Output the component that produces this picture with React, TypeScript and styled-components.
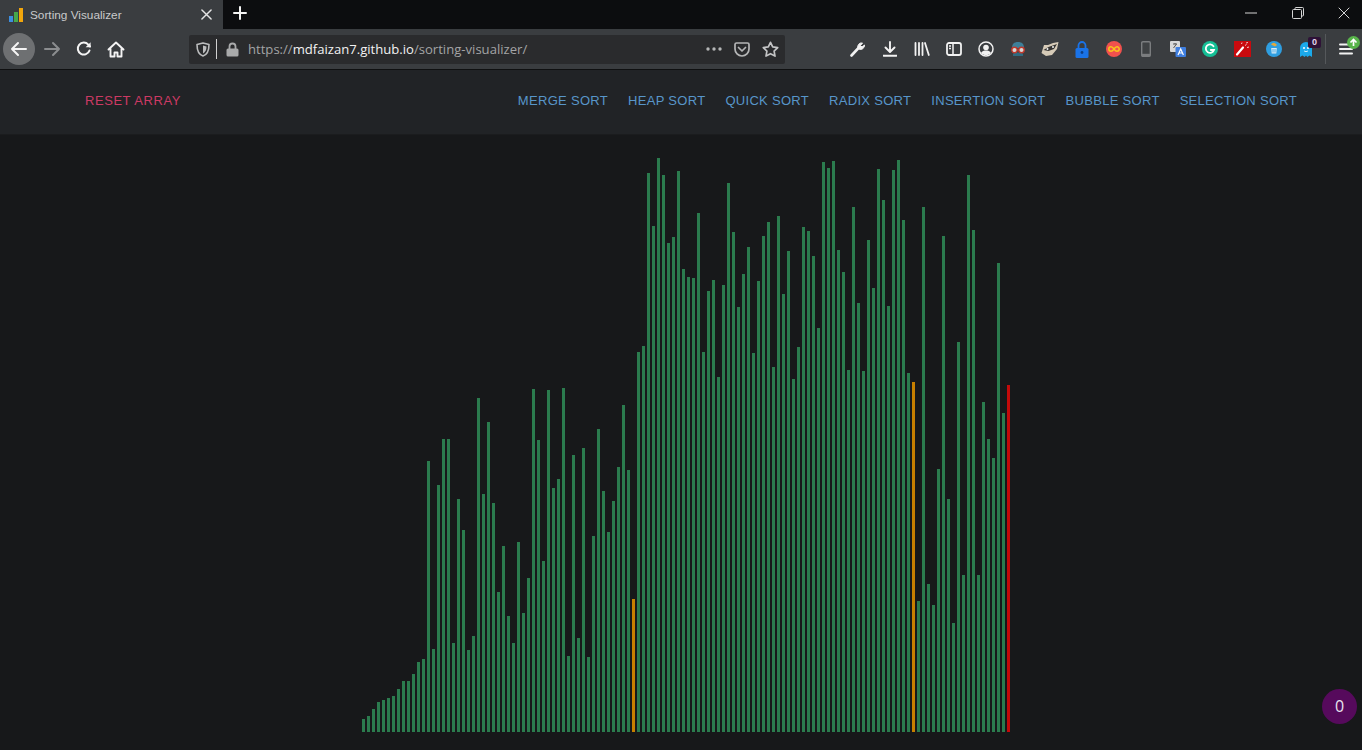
import React from "react";
import styled, { createGlobalStyle } from "styled-components";

const GlobalStyle = createGlobalStyle`
  html, body { margin: 0; padding: 0; height: 100%; background: #17181a; overflow: hidden; }
  #root { height: 100%; }
`;

const tops = [
  719,716,709,702,700,698,696,689,681,681,674,662,659,461,649,485,439,439,643,499,
  530,650,636,398,494,422,503,592,546,616,643,542,613,578,389,440,561,390,488,479,
  388,656,455,638,448,657,536,429,491,532,501,467,405,470,599,352,346,173,226,158,
  175,243,237,171,269,277,278,213,352,291,280,377,285,183,232,307,274,247,353,281,
  236,222,367,216,294,251,379,347,227,231,256,328,162,168,161,250,272,370,207,303,
  371,240,288,169,200,306,170,160,220,373,382,601,207,584,605,469,236,499,623,342,
  575,175,230,575,402,439,458,263,413,385,
];
const BASE = 732;
const kindOf = (i: number): "sorted" | "compare" | "pivot" =>
  i === 129 ? "pivot" : i === 54 || i === 110 ? "compare" : "sorted";
const barColors = { sorted: "#2b7b4e", compare: "#c77f00", pivot: "#c40a0a" };
const sorts = ["MERGE SORT", "HEAP SORT", "QUICK SORT", "RADIX SORT", "INSERTION SORT", "BUBBLE SORT", "SELECTION SORT"];

const Page = styled.div`
  position: relative;
  height: 750px;
  display: flex;
  flex-direction: column;
  background: #17181a;
  font-family: "Liberation Sans", Arial, sans-serif;
`;
const TabStrip = styled.div`
  height: 29px;
  display: flex;
  align-items: stretch;
  background: #0c0d0f;
`;
const Tab = styled.div`
  width: 223px;
  display: flex;
  align-items: center;
  padding: 0 11px 0 9px;
  box-sizing: border-box;
  background: #3a3d40;
`;
const TabTitle = styled.span`
  flex: 1;
  margin-left: 6px;
  font: 11.8px "Liberation Sans", sans-serif;
  color: #c9cacb;
  white-space: nowrap;
`;
const NewTab = styled.div`
  width: 34px;
  padding-bottom: 3px;
  display: flex;
  align-items: center;
  justify-content: center;
`;
const WindowControls = styled.div`
  margin-left: auto;
  padding-bottom: 3px;
  display: flex;
  align-items: center;
  gap: 10.5px;
`;
const WindowButton = styled.div`
  width: 36px;
  display: flex;
  align-items: center;
  justify-content: center;
`;
const Toolbar = styled.div`
  height: 40px;
  display: flex;
  align-items: center;
  padding-left: 3px;
  background: #3a3d40;
  border-bottom: 1px solid #0f1011;
`;
const BackCircle = styled.div`
  width: 32px;
  height: 32px;
  flex: none;
  margin-right: 1px;
  border-radius: 50%;
  background: #6e7072;
  display: flex;
  align-items: center;
  justify-content: center;
`;
const ToolSlot = styled.div`
  width: 32px;
  height: 32px;
  flex: none;
  display: flex;
  align-items: center;
  justify-content: center;
  position: relative;
`;
const UrlBar = styled.div`
  width: 596px;
  height: 29px;
  margin: 0 57px;
  flex: none;
  display: flex;
  align-items: center;
  box-sizing: border-box;
  padding: 0 1px 0 7px;
  background: #2a2b2d;
  border-radius: 2px;
`;
const UrlDivider = styled.div`
  width: 1px;
  height: 20px;
  margin: 0 9px 0 6px;
  background: #d0d0d0;
`;
const UrlText = styled.div`
  flex: 1;
  margin-left: 9px;
  font: 13.1px "Open Sans", sans-serif;
  color: #a3a4a5;
  white-space: nowrap;
`;
const UrlHost = styled.span`
  color: #f2f2f2;
`;
const UrlAction = styled.div`
  width: 28px;
  display: flex;
  align-items: center;
  justify-content: center;
`;
const ToolDivider = styled.div`
  width: 1px;
  height: 30px;
  flex: none;
  margin: 0 4px 0 3px;
  background: #55585b;
`;
const MenuDot = styled.div`
  position: absolute;
  top: 3px;
  right: 2px;
  width: 13px;
  height: 13px;
  border-radius: 50%;
  background: #58b44a;
  display: flex;
  align-items: center;
  justify-content: center;
`;
const CountBadge = styled.div`
  position: absolute;
  top: 4px;
  right: 1px;
  width: 13px;
  height: 11px;
  background: #2e1237;
  border-radius: 2px;
  color: #e6d8f0;
  font: bold 9px/11px "Liberation Sans", sans-serif;
  text-align: center;
`;
const NavBar = styled.nav`
  height: 65px;
  display: flex;
  align-items: center;
  box-sizing: border-box;
  padding: 0 65px 4px 85px;
  background: #212326;
  border-bottom: 1px solid #1b1c1e;
`;
const ResetLink = styled.a`
  font-size: 13px;
  letter-spacing: 0.55px;
  color: #cc3a64;
`;
const SortLinks = styled.div`
  margin-left: auto;
  display: flex;
  gap: 20px;
`;
const SortLink = styled.a`
  font-size: 13px;
  letter-spacing: 0.3px;
  color: #5896ca;
  white-space: nowrap;
`;
const Stage = styled.main`
  flex: 1;
  display: flex;
  align-items: flex-end;
  justify-content: center;
  padding: 0 0 18px 10px;
`;
const Bar = styled.div<{ $kind: keyof typeof barColors }>`
  width: 3px;
  margin: 0 1px;
  flex: none;
  background: ${(p) => barColors[p.$kind]};
`;
const Counter = styled.div`
  position: absolute;
  left: 1322px;
  top: 689px;
  width: 35px;
  height: 35px;
  border-radius: 50%;
  background: #560a5c;
  color: #e8e4f0;
  font: 16px/35px "Open Sans", sans-serif;
  text-align: center;
`;

const S = { fill: "none", strokeLinecap: "round", strokeLinejoin: "round" } as const;

const Favicon = () => (
  <svg width="15" height="14" viewBox="0 0 15 14">
    <rect x="0" y="8" width="4" height="6" fill="#3d8fe0" />
    <rect x="5" y="4" width="4" height="10" fill="#47a84a" />
    <rect x="10" y="0" width="4" height="14" fill="#f2a60c" />
  </svg>
);
const Cross = ({ size, color, w }: { size: number; color: string; w: number }) => (
  <svg width={size} height={size} viewBox="0 0 12 12">
    <path d="M1 1l10 10M11 1L1 11" stroke={color} strokeWidth={w} {...S} />
  </svg>
);
const Arrow = ({ color, flip }: { color: string; flip?: boolean }) => (
  <svg width="18" height="16" viewBox="0 0 18 16" style={flip ? { transform: "scaleX(-1)" } : undefined}>
    <path d="M2 8h14M8 2L2 8l6 6" stroke={color} strokeWidth="2" {...S} />
  </svg>
);
const Reload = () => (
  <svg width="16" height="16" viewBox="0 0 16 16">
    <path d="M13.5 9.500A6 6 0 1 1 12.300 3.600L14 5.500" stroke="#f4f4f4" strokeWidth="2" {...S} />
    <path d="M14.600 1.200v5h-5z" fill="#f4f4f4" />
  </svg>
);
const Home = () => (
  <svg width="18" height="17" viewBox="0 0 18 17">
    <path d="M1.500 8.500L9 1.500l7.500 7M3.500 7.500v8h4v-4h3v4h4v-8" stroke="#f4f4f4" strokeWidth="1.900" {...S} />
  </svg>
);
const Shield = () => (
  <svg width="14" height="15" viewBox="0 0 14 15">
    <path d="M7 1l6 1.500c0 6-1.500 10-6 11.500C2.500 12.500 1 8.500 1 2.500z" stroke="#bbbcbd" strokeWidth="1.600" {...S} />
    <path d="M7 3.500l3.500 1c0 3.500-1 5.500-3.500 7z" fill="#bbbcbd" />
  </svg>
);
const Lock = () => (
  <svg width="13" height="15" viewBox="0 0 13 15">
    <path d="M3.500 7V4.500a3 3 0 0 1 6 0V7" stroke="#a9aaab" strokeWidth="1.800" {...S} />
    <rect x="0.500" y="6.500" width="12" height="8" rx="1.500" fill="#a9aaab" />
  </svg>
);
const Dots = () => (
  <svg width="16" height="4" viewBox="0 0 16 4">
    <circle cx="2" cy="2" r="1.700" fill="#b5b6b7" />
    <circle cx="8" cy="2" r="1.700" fill="#b5b6b7" />
    <circle cx="14" cy="2" r="1.700" fill="#b5b6b7" />
  </svg>
);
const Pocket = () => (
  <svg width="16" height="15" viewBox="0 0 16 15">
    <path d="M2.500 1h11A1.500 1.500 0 0 1 15 2.500V7a7 7 0 0 1-14 0V2.500A1.500 1.500 0 0 1 2.500 1z" stroke="#b5b6b7" strokeWidth="1.700" {...S} />
    <path d="M4.500 5.500L8 9l3.500-3.500" stroke="#b5b6b7" strokeWidth="1.700" {...S} />
  </svg>
);
const Star = () => (
  <svg width="17" height="16" viewBox="0 0 17 16">
    <path d="M8.500 1.300l2.200 4.600 5 .7-3.600 3.500.9 5-4.500-2.400L4 15.100l.9-5L1.300 6.600l5-.7z" stroke="#c3c4c5" strokeWidth="1.700" {...S} />
  </svg>
);
const Wrench = () => (
  <svg width="16" height="16" viewBox="0 0 16 16">
    <path d="M1.500 14.500l7-7.500" stroke="#f2f2f2" strokeWidth="2.600" {...S} />
    <path d="M8 7.500A4 4 0 0 1 12.500 2L10.500 4.500l1.500 1.500L14.500 4A4 4 0 0 1 8 7.500z" fill="#f2f2f2" stroke="#f2f2f2" strokeWidth="1" />
  </svg>
);
const Download = () => (
  <svg width="14" height="16" viewBox="0 0 14 16">
    <path d="M7 1v9M2.500 6.500L7 11l4.500-4.500M.5 14.700h13" stroke="#f2f2f2" strokeWidth="1.900" {...S} />
  </svg>
);
const Library = () => (
  <svg width="16" height="14" viewBox="0 0 16 14">
    <path d="M1.500 1v12M5 1v12M8.500 1v12M11 1l3.800 12" stroke="#f2f2f2" strokeWidth="1.800" {...S} />
  </svg>
);
const Sidebar = () => (
  <svg width="16" height="14" viewBox="0 0 16 14">
    <rect x="1" y="1" width="14" height="12" rx="2" stroke="#f2f2f2" strokeWidth="1.800" fill="none" />
    <path d="M7 1v12M3 4h2M3 6.500h2" stroke="#f2f2f2" strokeWidth="1.500" />
  </svg>
);
const Account = () => (
  <svg width="16" height="16" viewBox="0 0 16 16">
    <circle cx="8" cy="8" r="7" stroke="#f2f2f2" strokeWidth="1.500" fill="none" />
    <circle cx="8" cy="6.500" r="2.800" fill="#f2f2f2" />
    <path d="M3 12c1-2 3-2.500 5-2.500s4 .5 5 2.500c-1.300 1.500-3 2-5 2s-3.700-.5-5-2z" fill="#f2f2f2" />
  </svg>
);
const SpyExt = () => (
  <svg width="18" height="16" viewBox="0 0 18 16">
    <path d="M3 7c0-4 2-6 6-6s6 2 6 6z" fill="#3d7f99" />
    <path d="M4 13c1-2 9-2 10 0v2H4z" fill="#2f6a80" />
    <circle cx="5.500" cy="9" r="2.700" fill="#d8d8d8" stroke="#c0392b" strokeWidth="1.400" />
    <circle cx="12.500" cy="9" r="2.700" fill="#d8d8d8" stroke="#c0392b" strokeWidth="1.400" />
  </svg>
);
const RaccoonExt = () => (
  <svg width="18" height="16" viewBox="0 0 18 16">
    <path d="M0.500 12L3 4l4 0 5-2 5.500-1-1.500 7-5 6-6 1z" fill="#d6cbb8" />
    <path d="M2.500 9l5-3 8.500-3-3 5-5.500 2z" fill="#353432" />
    <circle cx="6.500" cy="8" r="1" fill="#f1f1f1" />
    <circle cx="12" cy="6" r="1" fill="#f1f1f1" />
  </svg>
);
const LockExt = () => (
  <svg width="14" height="17" viewBox="0 0 14 17">
    <path d="M3.500 8V4.500a3.500 3.500 0 0 1 7 0V8" stroke="#1a73e8" strokeWidth="1.800" fill="none" />
    <rect x="0.500" y="7" width="13" height="10" rx="1.500" fill="#1a73e8" />
    <circle cx="7" cy="11.500" r="1.400" fill="#0d3f86" />
  </svg>
);
const InfinityExt = () => (
  <svg width="16" height="16" viewBox="0 0 16 16">
    <circle cx="8" cy="8" r="8" fill="#f1514d" />
    <path d="M8 8c-1-1.500-2-2.200-3-2.200a2.200 2.200 0 0 0 0 4.400c1 0 2-.7 3-2.200s2-2.200 3-2.200a2.200 2.200 0 0 1 0 4.400c-1 0-2-.7-3-2.200z" stroke="#f8c51c" strokeWidth="1.500" fill="none" />
  </svg>
);
const PhoneExt = () => (
  <svg width="10" height="16" viewBox="0 0 10 16">
    <rect x="0.700" y="0.700" width="8.600" height="14.600" rx="1.200" stroke="#7b7d7f" strokeWidth="1.400" fill="#3f4244" />
    <rect x="0.700" y="12.800" width="8.600" height="2.500" fill="#7b7d7f" />
  </svg>
);
const TranslateExt = () => (
  <svg width="16" height="16" viewBox="0 0 16 16">
    <rect x="0" y="0" width="10" height="11" rx="1" fill="#d7d8d9" />
    <path d="M3 3h4M5 2v1M3.500 7l3-4" stroke="#555" strokeWidth="1" />
    <rect x="5.500" y="6" width="10.500" height="10" rx="1" fill="#3f7fe0" />
    <path d="M8 14l2.700-6 2.700 6M9 12h3.500" stroke="#fff" strokeWidth="1.200" fill="none" />
  </svg>
);
const GrammarlyExt = () => (
  <svg width="16" height="16" viewBox="0 0 16 16">
    <circle cx="8" cy="8" r="8" fill="#15bf96" />
    <path d="M11.500 5.200A4.200 4.200 0 1 0 12 9H8.800" stroke="#fff" strokeWidth="1.800" fill="none" strokeLinecap="round" />
  </svg>
);
const WandExt = () => (
  <svg width="17" height="16" viewBox="0 0 17 16">
    <rect width="17" height="16" fill="#c90a0e" />
    <path d="M3 13.500L9 6.500" stroke="#fff" strokeWidth="2.200" strokeLinecap="round" />
    <path d="M11 4.500l1.500-1M13 6.500l2-.5M7.500 3l.5-1.500M12 2l2-.5" stroke="#f3c5c5" strokeWidth="1" />
  </svg>
);
const RecycleExt = () => (
  <svg width="16" height="16" viewBox="0 0 16 16">
    <circle cx="8" cy="8" r="8" fill="#2f9ee0" />
    <path d="M5 3.500c1-2 4-2.500 6 .5l-2 1.500z" fill="#e5a83a" />
    <path d="M5.200 7h5.600l-.5 5.500H5.700z" fill="#d9ecf7" />
    <path d="M7 8v3.500M9 8v3.500" stroke="#2f9ee0" strokeWidth="0.800" />
  </svg>
);
const GhostExt = () => (
  <svg width="14" height="16" viewBox="0 0 14 16">
    <path d="M1 7a6 6 0 0 1 12 0v9l-2.400-1.500L8.300 16 7 14.500 5.700 16l-2.300-1.500L1 16z" fill="#1ba9ea" />
    <circle cx="5" cy="7" r="1" fill="#fff" />
    <circle cx="9" cy="7" r="1" fill="#fff" />
    <path d="M5 9.800c1 1 3 1 4 0" stroke="#fff" strokeWidth="0.800" fill="none" />
  </svg>
);
const Burger = () => (
  <svg width="14" height="12" viewBox="0 0 14 12">
    <path d="M1 1.500h12M1 6h12M1 10.500h12" stroke="#f2f2f2" strokeWidth="2" strokeLinecap="round" />
  </svg>
);
const UpArrow = () => (
  <svg width="9" height="9" viewBox="0 0 9 9">
    <path d="M4.500 8V1.500M1.500 4.500l3-3 3 3" stroke="#fff" strokeWidth="1.700" fill="none" />
  </svg>
);

export default function App() {
  return (
    <Page>
      <GlobalStyle />
      <TabStrip>
        <Tab>
          <Favicon />
          <TabTitle>Sorting Visualizer</TabTitle>
          <Cross size={11} color="#e4e4e4" w={1.6} />
        </Tab>
        <NewTab>
          <svg width="14" height="14" viewBox="0 0 14 14">
            <path d="M7 1v12M1 7h12" stroke="#f5f5f5" strokeWidth="2" strokeLinecap="round" />
          </svg>
        </NewTab>
        <WindowControls>
          <WindowButton>
            <svg width="12" height="2" viewBox="0 0 12 2"><path d="M0 1h12" stroke="#d5d5d5" strokeWidth="1" /></svg>
          </WindowButton>
          <WindowButton>
            <svg width="12" height="12" viewBox="0 0 12 12">
              <rect x="0.500" y="2.500" width="9" height="9" rx="1" stroke="#d5d5d5" fill="none" />
              <path d="M3 2.500V1.500a1 1 0 0 1 1-1h6.500a1 1 0 0 1 1 1V8a1 1 0 0 1-1 1H9.500" stroke="#d5d5d5" fill="none" />
            </svg>
          </WindowButton>
          <WindowButton>
            <Cross size={12} color="#d5d5d5" w={1} />
          </WindowButton>
        </WindowControls>
      </TabStrip>

      <Toolbar>
        <BackCircle><Arrow color="#f4f4f4" /></BackCircle>
        <ToolSlot><Arrow color="#8b8d8f" flip /></ToolSlot>
        <ToolSlot><Reload /></ToolSlot>
        <ToolSlot><Home /></ToolSlot>
        <UrlBar>
          <Shield />
          <UrlDivider />
          <Lock />
          <UrlText>
            https://<UrlHost>mdfaizan7.github.io</UrlHost>/sorting-visualizer/
          </UrlText>
          <UrlAction><Dots /></UrlAction>
          <UrlAction><Pocket /></UrlAction>
          <UrlAction><Star /></UrlAction>
        </UrlBar>
        <ToolSlot><Wrench /></ToolSlot>
        <ToolSlot><Download /></ToolSlot>
        <ToolSlot><Library /></ToolSlot>
        <ToolSlot><Sidebar /></ToolSlot>
        <ToolSlot><Account /></ToolSlot>
        <ToolSlot><SpyExt /></ToolSlot>
        <ToolSlot><RaccoonExt /></ToolSlot>
        <ToolSlot><LockExt /></ToolSlot>
        <ToolSlot><InfinityExt /></ToolSlot>
        <ToolSlot><PhoneExt /></ToolSlot>
        <ToolSlot><TranslateExt /></ToolSlot>
        <ToolSlot><GrammarlyExt /></ToolSlot>
        <ToolSlot><WandExt /></ToolSlot>
        <ToolSlot><RecycleExt /></ToolSlot>
        <ToolSlot>
          <GhostExt />
          <CountBadge>0</CountBadge>
        </ToolSlot>
        <ToolDivider />
        <ToolSlot>
          <Burger />
          <MenuDot><UpArrow /></MenuDot>
        </ToolSlot>
      </Toolbar>

      <NavBar>
        <ResetLink>RESET ARRAY</ResetLink>
        <SortLinks>
          {sorts.map((s) => (
            <SortLink key={s}>{s}</SortLink>
          ))}
        </SortLinks>
      </NavBar>

      <Stage>
        {tops.map((top, i) => (
          <Bar key={i} $kind={kindOf(i)} style={{ height: BASE - top }} />
        ))}
      </Stage>
      <Counter>0</Counter>
    </Page>
  );
}
